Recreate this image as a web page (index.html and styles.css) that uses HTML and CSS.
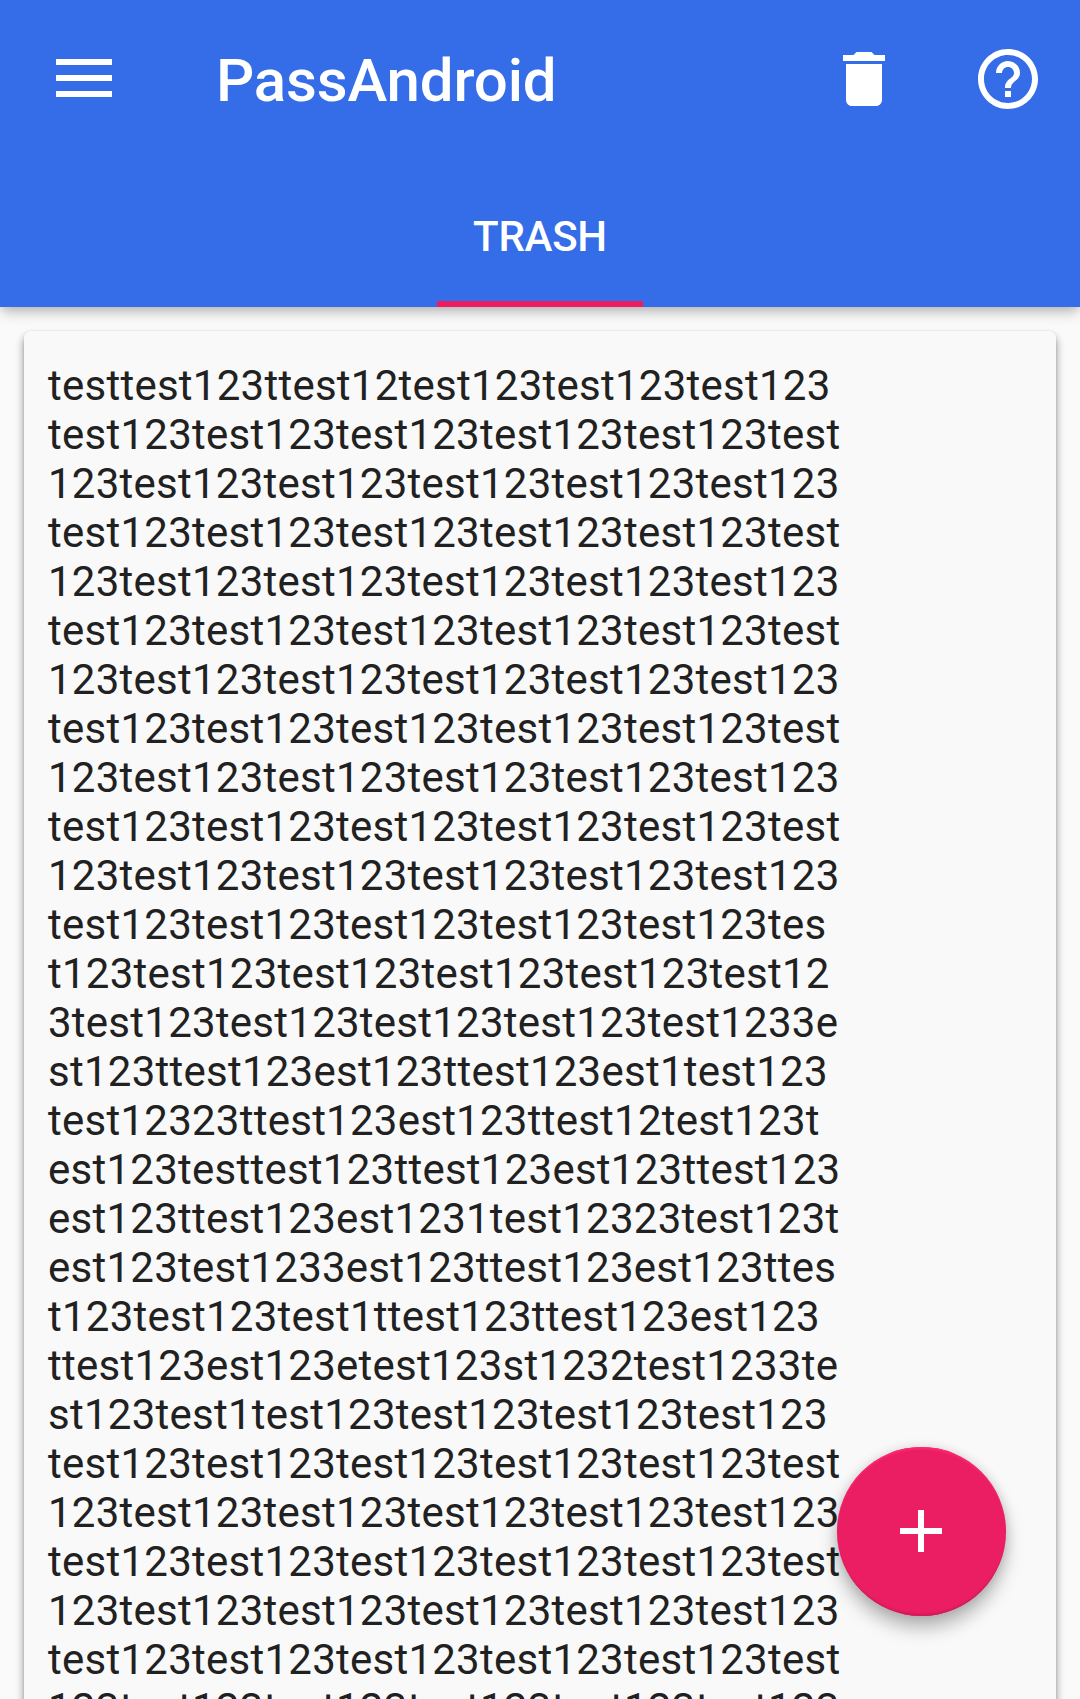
FILE: index.html
```html
<!DOCTYPE html>
<html lang="en">
<head>
<meta charset="utf-8">
<title>PassAndroid</title>
<link rel="stylesheet" href="styles.css">
</head>
<body>
<div class="app">
  <header class="app-bar">
    <div class="toolbar">
      <svg class="icon icon-menu" viewBox="0 0 60 60" aria-label="Menu"><path d="M2 10h56v6H2zM2 26h56v6H2zM2 42h56v6H2z"/></svg>
      <h1 class="title">PassAndroid</h1>
      <div class="actions">
        <svg class="icon" viewBox="0 0 24 24" aria-label="Empty trash"><path d="M6 19c0 1.1.9 2 2 2h8c1.1 0 2-.9 2-2V7H6v12zM19 4h-3.5l-1-1h-5l-1 1H5v2h14V4z"/></svg>
        <svg class="icon" viewBox="0 0 24 24" aria-label="Help"><path d="M11 18h2v-2h-2v2zm1-16C6.48 2 2 6.48 2 12s4.480 10 10 10 10-4.480 10-10S17.520 2 12 2zm0 18c-4.410 0-8-3.590-8-8s3.590-8 8-8 8 3.590 8 8-3.590 8-8 8zm0-14c-2.210 0-4 1.790-4 4h2c0-1.100.9-2 2-2s2 .9 2 2c0 2-3 1.750-3 5h2c0-2.250 3-2.500 3-5 0-2.210-1.790-4-4-4z"/></svg>
      </div>
    </div>
    <nav class="tabs"><span class="tab">TRASH</span></nav>
  </header>
  <main class="list">
    <article class="card">testtest123ttest12test123test123test123
test123test123test123test123test123test
123test123test123test123test123test123
test123test123test123test123test123test
123test123test123test123test123test123
test123test123test123test123test123test
123test123test123test123test123test123
test123test123test123test123test123test
123test123test123test123test123test123
test123test123test123test123test123test
123test123test123test123test123test123
test123test123test123test123test123tes
t123test123test123test123test123test12
3test123test123test123test123test1233e
st123ttest123est123ttest123est1test123
test12323ttest123est123ttest12test123t
est123testtest123ttest123est123ttest123
est123ttest123est1231test12323test123t
est123test1233est123ttest123est123ttes
t123test123test1ttest123ttest123est123
ttest123est123etest123st1232test1233te
st123test1test123test123test123test123
test123test123test123test123test123test
123test123test123test123test123test123
test123test123test123test123test123test
123test123test123test123test123test123
test123test123test123test123test123test
123test123test123test123test123test123</article>
  </main>
  <button class="fab" aria-label="Add">
    <svg class="icon" viewBox="0 0 24 24"><path d="M19 13h-6v6h-2v-6H5v-2h6V5h2v6h6v2z"/></svg>
  </button>
</div>
</body>
</html>
```
FILE: styles.css
```css
* {
  box-sizing: border-box;
}

body {
  margin: 0;
  font-family: Roboto, sans-serif;
  background: #fafafa;
}

.app {
  position: relative;
  display: flex;
  flex-direction: column;
  height: 1699px;
  overflow: hidden;
}

.app-bar {
  position: relative;
  z-index: 0;
  flex: none;
  height: 307px;
  background: #356ce8;
  color: #fff;
  box-shadow: 0 8px 12px -2px rgba(0, 0, 0, 0.2), 0 0 10px rgba(0, 0, 0, 0.15);
}

.toolbar {
  display: flex;
  align-items: center;
  height: 163px;
  padding: 0 36px 5px 54px;
}

.icon {
  display: block;
  width: 72px;
  height: 72px;
  fill: currentColor;
}

.icon-menu {
  width: 60px;
  height: 60px;
}

.title {
  margin: 0 0 0 102px;
  padding-top: 4px;
  font-size: 60px;
  font-weight: 500;
  line-height: 70px;
  letter-spacing: -0.15px;
}

.actions {
  display: flex;
  gap: 72px;
  margin-left: auto;
}

.tabs {
  display: flex;
  justify-content: center;
  height: 144px;
}

.tab {
  display: flex;
  align-items: center;
  justify-content: center;
  width: 206px;
  padding-top: 8px;
  border-bottom: 6px solid #eb1e63;
  font-size: 42px;
  font-weight: 500;
  letter-spacing: -0.25px;
}

.list {
  position: relative;
  z-index: 1;
  padding: 24px;
}

.card {
  padding: 30px 24px 24px;
  border-radius: 6px;
  background: #f9f9f9;
  box-shadow: 0 6px 8px rgba(0, 0, 0, 0.45), 0 0 2px rgba(0, 0, 0, 0.12);
  color: #212121;
  font-size: 42px;
  line-height: 49px;
  letter-spacing: 0.25px;
  white-space: pre;
}

.fab {
  position: absolute;
  z-index: 2;
  right: 74.5px;
  bottom: 83.5px;
  display: grid;
  place-items: center;
  width: 169px;
  height: 169px;
  padding: 0;
  border: 0;
  border-radius: 50%;
  background: #eb1e63;
  color: #fff;
  box-shadow: inset 0 3px 2px -1px #ff2870, inset 0 -3px 2px -1px #d01b58, 0 12px 18px rgba(0, 0, 0, 0.27), 0 0 12px rgba(0, 0, 0, 0.12);
}
```
